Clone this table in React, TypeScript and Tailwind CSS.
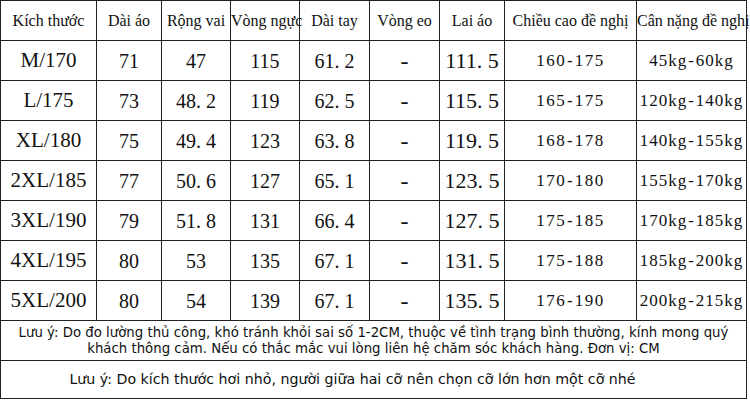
import React from 'react'

const headers = [
	'Kích thước',
	'Dài áo',
	'Rộng vai',
	'Vòng ngực',
	'Dài tay',
	'Vòng eo',
	'Lai áo',
	'Chiều cao đề nghị',
	'Cân nặng đề nghị',
]

const widths = [96, 65, 69, 69, 70, 70, 65, 132, 110]

const rows = [
	['M/170', '71', '47', '115', '61.2', '-', '111.5', '160-175', '45kg-60kg'],
	['L/175', '73', '48.2', '119', '62.5', '-', '115.5', '165-175', '120kg-140kg'],
	['XL/180', '75', '49.4', '123', '63.8', '-', '119.5', '168-178', '140kg-155kg'],
	['2XL/185', '77', '50.6', '127', '65.1', '-', '123.5', '170-180', '155kg-170kg'],
	['3XL/190', '79', '51.8', '131', '66.4', '-', '127.5', '175-185', '170kg-185kg'],
	['4XL/195', '80', '53', '135', '67.1', '-', '131.5', '175-188', '185kg-200kg'],
	['5XL/200', '80', '54', '139', '67.1', '-', '135.5', '176-190', '200kg-215kg'],
]

// per-column text style for the data rows
const cellText = [
	'text-[21px]',
	'text-[20px]',
	'text-[20px]',
	'text-[20px]',
	'text-[20px]',
	'text-[24px]',
	'text-[22px]',
	'text-[17px] tracking-[1.5px]',
	'text-[17px] tracking-[1px]',
]

// the source font gives the decimal point and the dash a full half-em cell
function Num({ value }: { value: string }) {
	const out: React.ReactNode[] = []
	let buf = ''
	value.split('').forEach((ch, i) => {
		if (ch === '.' || (ch === '-' && value.length > 1)) {
			if (buf) out.push(buf)
			buf = ''
			out.push(
				<span key={i} className={ch === '.' ? 'inline-block w-[0.5em] text-left' : 'inline-block w-[0.5em] text-center'}>
					{ch}
				</span>
			)
		} else {
			buf += ch
		}
	})
	if (buf) out.push(buf)
	return <>{out}</>
}

export default function App() {
	return (
		<div className="w-[750px] h-[400px] bg-white overflow-hidden">
			<table
				className="table-fixed border-collapse w-[747px] text-[#111]"
				style={{ fontFamily: '"Liberation Serif", "Times New Roman", serif' }}
			>
				<colgroup>
					{widths.map((w, i) => (
						<col key={i} style={{ width: w }} />
					))}
				</colgroup>
				<thead>
					<tr className="h-[40px]">
						{headers.map((h) => (
							<th
								key={h}
								className="border border-[#222] font-normal text-[16px] whitespace-nowrap text-center px-0"
							>
								{h}
							</th>
						))}
					</tr>
				</thead>
				<tbody>
					{rows.map((r) => (
						<tr key={r[0]} className="h-[40px]">
							{r.map((c, i) => (
								<td
									key={i}
									className={`border border-[#222] text-center whitespace-nowrap leading-none ${cellText[i]}`}
								>
									<Num value={c} />
								</td>
							))}
						</tr>
					))}
					<tr className="h-[40px]">
						<td
							colSpan={9}
							className="border border-[#222] text-center text-[13.3px] leading-[16px] px-2"
							style={{ fontFamily: '"DejaVu Sans", Tahoma, sans-serif' }}
						>
							Lưu ý: Do đo lường thủ công, khó tránh khỏi sai số 1-2CM, thuộc về tình trạng bình thường, kính mong quý khách thông cảm. Nếu có thắc mắc vui lòng liên hệ chăm sóc khách hàng. Đơn vị: CM
						</td>
					</tr>
					<tr className="h-[38px]">
						<td
							colSpan={9}
							className="border border-[#222] text-center text-[14.2px] pr-[42px]"
							style={{ fontFamily: '"DejaVu Sans", Tahoma, sans-serif' }}
						>
							Lưu ý: Do kích thước hơi nhỏ, người giữa hai cỡ nên chọn cỡ lớn hơn một cỡ nhé
						</td>
					</tr>
				</tbody>
			</table>
		</div>
	)
}
